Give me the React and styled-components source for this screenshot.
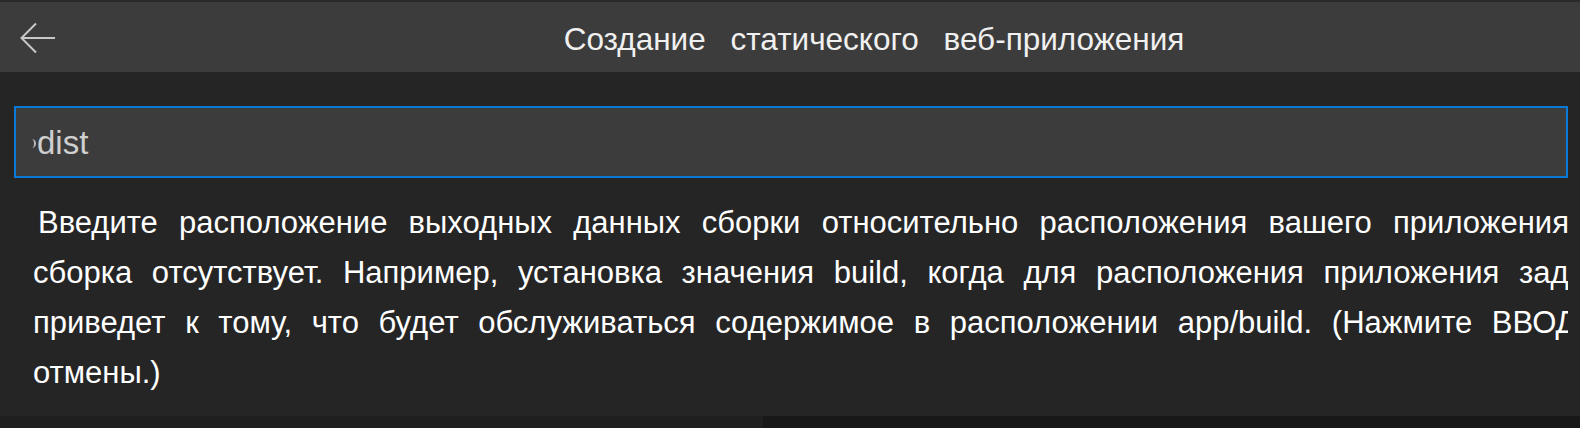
import React from "react";
import styled, { createGlobalStyle } from "styled-components";

const GlobalStyle = createGlobalStyle`
  html, body {
    margin: 0;
    padding: 0;
    background: #252526;
  }
  body {
    font-family: "Liberation Sans", Arial, sans-serif;
  }
`;

const Widget = styled.div`
  width: 1580px;
  height: 428px;
  overflow: hidden;
  background: #252526;
  border-top: 2px solid #2a2a2a;
  box-sizing: border-box;
  display: flex;
  flex-direction: column;
`;

const Header = styled.div`
  height: 70px;
  flex: none;
  background: #3c3c3c;
  display: grid;
  grid-template-columns: 74px 1fr;
  align-items: center;
`;

const BackButton = styled.button`
  width: 74px;
  height: 70px;
  padding: 0 0 0 20px;
  border: 0;
  background: transparent;
  color: #c8c8c8;
  display: flex;
  align-items: center;
  cursor: pointer;
`;

const Title = styled.div`
  padding-left: 94px;
  text-align: center;
  color: #f0f0f0;
  font-size: 31.5px;
  word-spacing: 16px;
  white-space: nowrap;
  line-height: 70px;
  padding-top: 2px;
`;

const Body = styled.div`
  flex: 1;
  padding: 34px 12px 0 14px;
  display: flex;
  flex-direction: column;
`;

const Field = styled.div`
  height: 72px;
  box-sizing: border-box;
  border: 2px solid #0a7ad6;
  background: #3c3c3c;
  display: flex;
  align-items: center;
  padding-left: 21px;
`;

const Value = styled.span`
  position: relative;
  color: #cfcfcf;
  font-size: 33px;
  padding-top: 2px;

  &::before {
    content: "";
    position: absolute;
    left: -7px;
    top: 50%;
    margin-top: -3px;
    width: 4px;
    height: 9px;
    border-right: 2px solid #bdbdbd;
    border-radius: 0 6px 6px 0;
  }
`;

const Message = styled.div`
  margin-top: 20px;
  overflow: hidden;
  color: #ffffff;
  font-size: 31px;
  line-height: 50px;
  padding-left: 19px;
`;

const Line = styled.div`
  white-space: nowrap;
  word-spacing: ${(p) => (p.$first ? "12.6px" : "11px")};
  text-indent: ${(p) => (p.$first ? "5px" : "0")};
`;

const StatusStrip = styled.div`
  margin-top: auto;
  height: 12px;
  flex: none;
  display: grid;
  grid-template-columns: 763px 1fr;
`;

const StripPart = styled.div`
  background: ${(p) => p.$tone};
`;

function ArrowLeft() {
  return (
    <svg width="36" height="32" viewBox="0 0 36 32" fill="none">
      <path
        d="M35 16H2M16 1.5L1.5 16L16 30.5"
        stroke="currentColor"
        strokeWidth="2"
      />
    </svg>
  );
}

const lines = [
  "Введите расположение выходных данных сборки относительно расположения вашего приложения. Оставьте поле пустым, если",
  "сборка отсутствует. Например, установка значения build, когда для расположения приложения задано app,",
  "приведет к тому, что будет обслуживаться содержимое в расположении app/build. (Нажмите ВВОД для подтверждения или ESC для",
  "отмены.)",
];

export default function App() {
  return (
    <>
      <GlobalStyle />
      <Widget>
        <Header>
          <BackButton aria-label="Назад">
            <ArrowLeft />
          </BackButton>
          <Title>Создание статического веб-приложения</Title>
        </Header>
        <Body>
          <Field>
            <Value>dist</Value>
          </Field>
          <Message>
            {lines.map((l, i) => (
              <Line key={i} $first={i === 0}>
                {l}
              </Line>
            ))}
          </Message>
        </Body>
        <StatusStrip>
          <StripPart $tone="#1f1f1f" />
          <StripPart $tone="#181818" />
        </StatusStrip>
      </Widget>
    </>
  );
}
